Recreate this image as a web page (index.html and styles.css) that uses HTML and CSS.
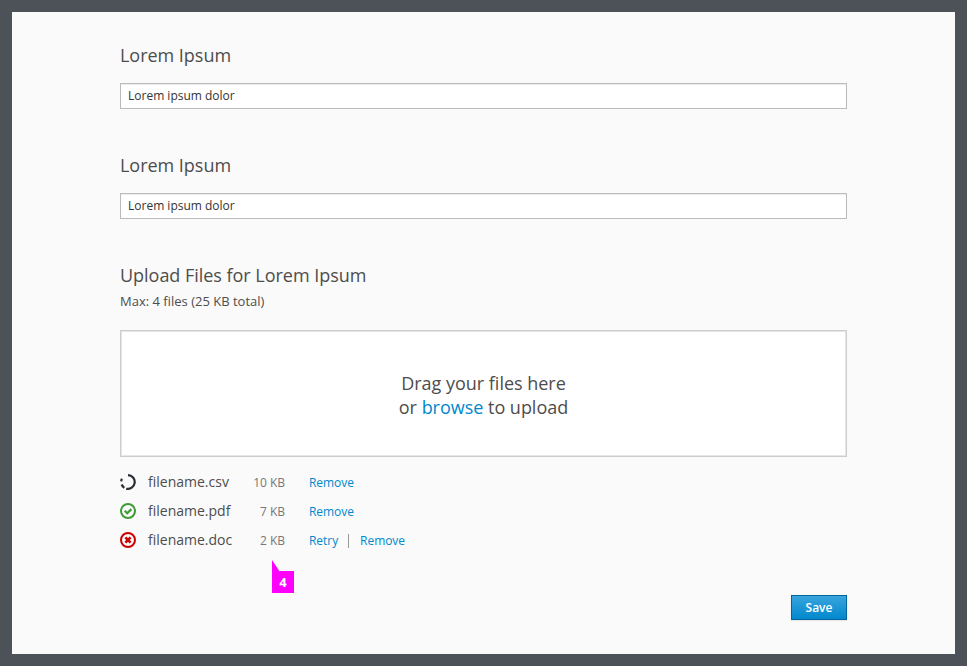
FILE: index.html
```html
<!DOCTYPE html>
<html lang="en">
<head>
<meta charset="utf-8">
<title>Upload Files</title>
<link rel="stylesheet" href="styles.css">
</head>
<body>
<main class="panel">
  <section class="field">
    <h2 class="title">Lorem Ipsum</h2>
    <input class="input" type="text" value="Lorem ipsum dolor">
  </section>
  <section class="field">
    <h2 class="title">Lorem Ipsum</h2>
    <input class="input" type="text" value="Lorem ipsum dolor">
  </section>
  <section class="upload">
    <h2 class="title">Upload Files for Lorem Ipsum</h2>
    <p class="hint">Max: 4 files (25 KB total)</p>
    <div class="drop"><p>Drag your files here<br>or <a>browse</a> to upload</p></div>
    <ul class="files">
      <li class="file">
        <svg class="icon" viewBox="0 0 16 16" fill="none" stroke="#292e34" stroke-width="2.2"><path d="M8 1.1a6.9 6.9 0 1 1-1.8 13.6"/><path d="M4.3 13.8A7 7 0 0 1 1.7 10.5M1.2 7.3a7 7 0 0 1 .7-2.5"/></svg>
        <span class="name">filename.csv</span><span class="size">10 KB</span><a>Remove</a>
      </li>
      <li class="file">
        <svg class="icon" viewBox="0 0 16 16" fill="none" stroke="#3f9c35" stroke-width="2"><circle cx="8" cy="8" r="7"/><path d="M4.7 7.8 7.2 10.3 11.4 6.1" stroke-width="2.2"/></svg>
        <span class="name">filename.pdf</span><span class="size">7 KB</span><a>Remove</a>
      </li>
      <li class="file">
        <svg class="icon" viewBox="0 0 16 16" fill="none" stroke="#c00" stroke-width="2"><circle cx="8" cy="8" r="7"/><path d="m5.4 5.4 5.2 5.2m0-5.2-5.2 5.2" stroke-width="2.6"/></svg>
        <span class="name">filename.doc</span><span class="size">2 KB</span><a>Retry</a><span class="divider"></span><a>Remove</a>
        <span class="marker"><svg class="tip" viewBox="0 0 8 12"><path d="M0 0 8 12H0z" fill="#f0f"/></svg>4</span>
      </li>
    </ul>
  </section>
  <div class="actions"><button class="save">Save</button></div>
</main>
</body>
</html>
```
FILE: styles.css
```css
* { box-sizing: border-box; }
body {
  margin: 0;
  height: 666px;
  padding: 12px;
  background: #4d5258;
  font-family: "Open Sans", sans-serif;
  color: #4d4d4d;
}
.panel { height: 642px; padding: 30px 108px 0; background: #fafafa; }
.field { height: 110px; }
.title { margin: 0; font-size: 18px; line-height: 26px; font-weight: 400; letter-spacing: -.03px; }
.input {
  display: block;
  width: 100%;
  height: 26px;
  margin-top: 15px;
  padding: 0 7px 2px;
  border: 1px solid #bbb;
  border-radius: 0;
  background: #fff;
  box-shadow: inset 0 1px 1px rgba(0, 0, 0, .08);
  font: 12px "Open Sans", sans-serif;
  color: #333;
}
.hint { margin: 4px 0 0; font-size: 13px; line-height: 18px; }
.drop {
  height: 127px;
  margin-top: 20px;
  padding-top: 40px;
  border: 1px solid #ccc;
  background: #fff;
  box-shadow: inset 0 0 0 1px #e6e6e6;
  text-align: center;
  font-size: 18px;
  line-height: 24px;
  letter-spacing: -.02px;
}
.drop p { margin: 0; }
a { color: #0088ce; }
.files { margin: 11px 0 0; padding: 0; list-style: none; }
.file { display: flex; align-items: center; position: relative; height: 29px; font-size: 12px; letter-spacing: -.05px; }
.icon { width: 16px; height: 16px; margin: 0 12px 1px 0; }
.name { width: 87px; padding-bottom: 2px; font-size: 14px; letter-spacing: 0; }
.size { width: 50px; margin-right: 24px; text-align: right; color: #777; }
.divider { width: 1px; height: 14px; margin: 0 11px 0 10px; background: #999; }
.marker {
  position: absolute;
  left: 152px;
  top: 45px;
  width: 22px;
  height: 22px;
  background: #f0f;
  color: #fff;
  font-size: 13px;
  font-weight: 700;
  line-height: 22px;
  text-align: center;
}
.tip { position: absolute; left: 0; top: -11px; width: 8px; height: 12px; }
.actions { display: flex; justify-content: flex-end; margin-top: 40px; }
.save {
  width: 56px;
  height: 25px;
  padding: 0;
  border: 1px solid #00659c;
  background: linear-gradient(#39a5dc, #0088ce);
  box-shadow: 0 1px 1px rgba(0, 0, 0, .08);
  color: #fff;
  font: 600 12px "Open Sans", sans-serif;
}
```
